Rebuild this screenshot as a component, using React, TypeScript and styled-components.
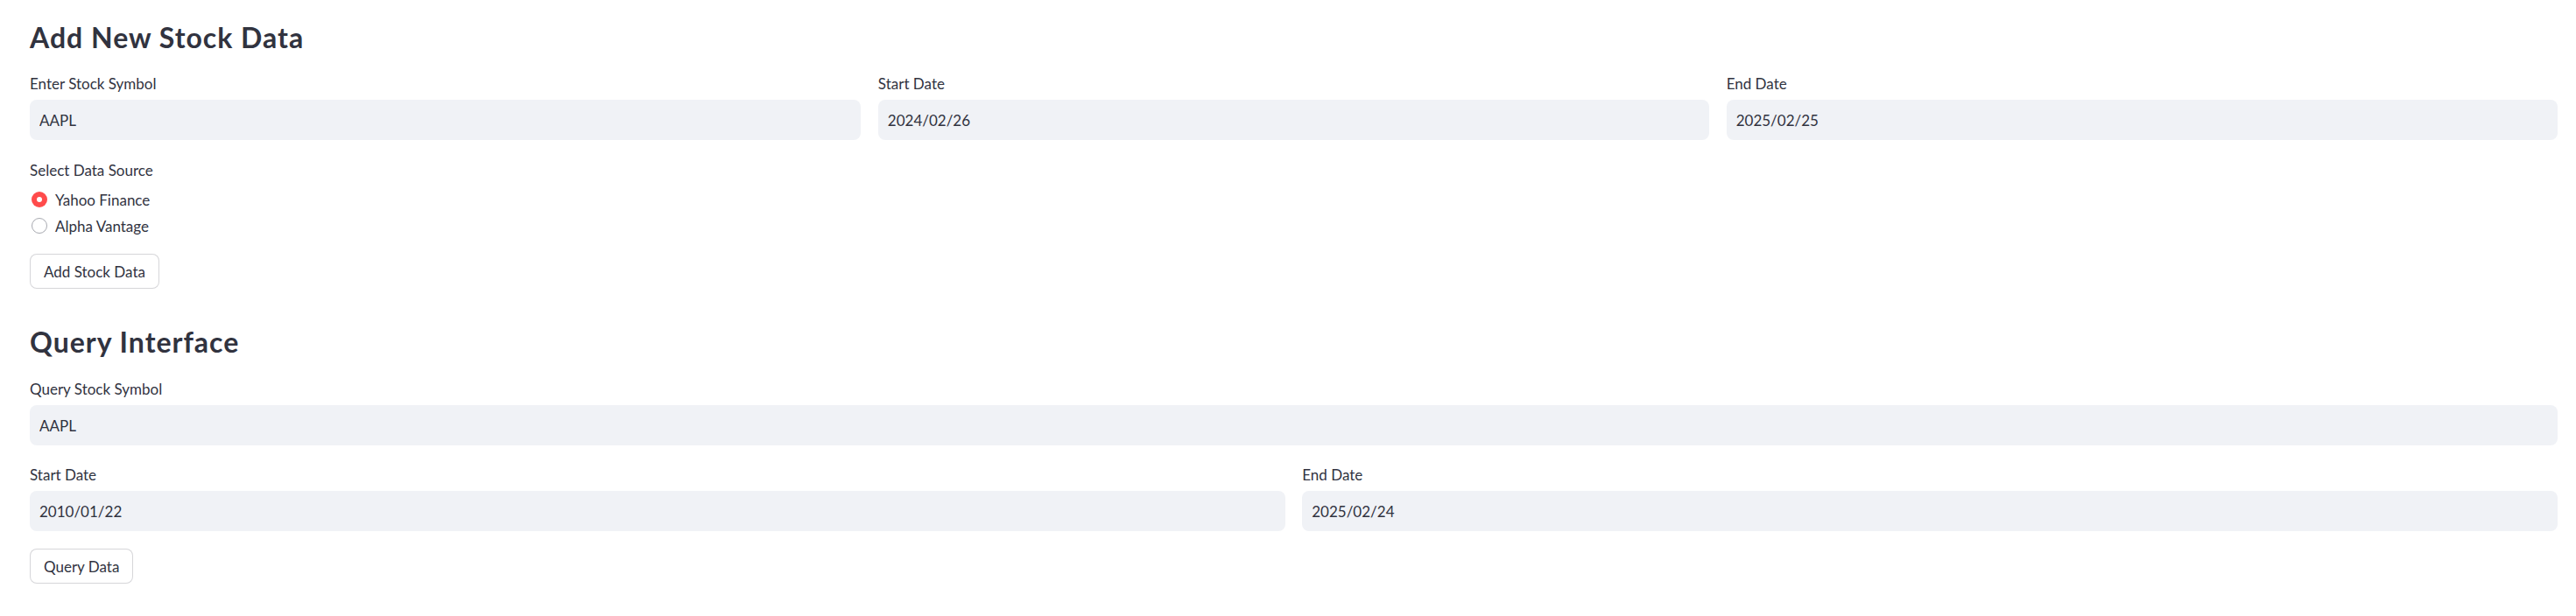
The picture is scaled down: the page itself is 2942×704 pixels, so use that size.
import styled, { createGlobalStyle } from "styled-components";

const GlobalStyle = createGlobalStyle`
  html, body {
    margin: 0;
    padding: 0;
    background: #ffffff;
  }
  body {
    font-family: "Source Sans Pro", Lato, "Noto Sans", sans-serif;
    color: #31333f;
  }
`;

const Page = styled.main`
  padding: 25px 21px 0 34px;
`;

const Heading = styled.h2<{ $mb: number }>`
  margin: 0 0 ${(p) => p.$mb}px;
  font-size: 32px;
  line-height: 36px;
  font-weight: 700;
  letter-spacing: 1px;
  color: #31333f;
`;

const Row = styled.div<{ $cols: number; $mb: number }>`
  display: grid;
  grid-template-columns: repeat(${(p) => p.$cols}, 1fr);
  column-gap: 19.5px;
  margin-bottom: ${(p) => p.$mb}px;
`;

const Field = styled.div`
  display: flex;
  flex-direction: column;
  min-width: 0;
`;

const Label = styled.label`
  font-size: 17px;
  line-height: 22px;
  margin-bottom: 7px;
  color: #31333f;
`;

const Input = styled.input`
  box-sizing: border-box;
  height: 46px;
  width: 100%;
  border: none;
  outline: none;
  border-radius: 8px;
  background: #f0f2f6;
  padding: 0 11px;
  font-family: inherit;
  font-size: 17px;
  color: #31333f;
`;

const RadioGroup = styled.div<{ $mb: number }>`
  display: flex;
  flex-direction: column;
  margin-bottom: ${(p) => p.$mb}px;
`;

const RadioRow = styled.div`
  display: flex;
  align-items: center;
  height: 30px;
  font-size: 17px;
  color: #31333f;
`;

const RadioDot = styled.span<{ $checked: boolean }>`
  box-sizing: border-box;
  width: 18px;
  height: 18px;
  margin: 0 9px 0 2px;
  border-radius: 50%;
  display: inline-flex;
  align-items: center;
  justify-content: center;
  background: ${(p) => (p.$checked ? "#ff4b4b" : "#ffffff")};
  border: ${(p) => (p.$checked ? "none" : "1.5px solid #a7a9b0")};

  &::after {
    content: "";
    width: 6px;
    height: 6px;
    border-radius: 50%;
    background: #ffffff;
    display: ${(p) => (p.$checked ? "block" : "none")};
  }
`;

const Button = styled.button<{ $mb: number }>`
  display: inline-flex;
  align-items: center;
  height: 40px;
  padding: 0 15px;
  margin-bottom: ${(p) => p.$mb}px;
  border: 1px solid rgba(49, 51, 63, 0.2);
  border-radius: 8px;
  background: #ffffff;
  font-family: inherit;
  font-size: 17px;
  color: #31333f;
`;

function TextField({ label, value }: { label: string; value: string }) {
  return (
    <Field>
      <Label>{label}</Label>
      <Input readOnly value={value} />
    </Field>
  );
}

const sources = ["Yahoo Finance", "Alpha Vantage"];

export default function App() {
  return (
    <Page>
      <GlobalStyle />
      <Heading $mb={24}>Add New Stock Data</Heading>
      <Row $cols={3} $mb={24}>
        <TextField label="Enter Stock Symbol" value="AAPL" />
        <TextField label="Start Date" value="2024/02/26" />
        <TextField label="End Date" value="2025/02/25" />
      </Row>
      <RadioGroup $mb={17}>
        <Label>Select Data Source</Label>
        {sources.map((s, i) => (
          <RadioRow key={s}>
            <RadioDot $checked={i === 0} />
            {s}
          </RadioRow>
        ))}
      </RadioGroup>
      <div>
        <Button $mb={43}>Add Stock Data</Button>
      </div>

      <Heading $mb={25}>Query Interface</Heading>
      <Row $cols={1} $mb={23}>
        <TextField label="Query Stock Symbol" value="AAPL" />
      </Row>
      <Row $cols={2} $mb={20}>
        <TextField label="Start Date" value="2010/01/22" />
        <TextField label="End Date" value="2025/02/24" />
      </Row>
      <div>
        <Button $mb={0}>Query Data</Button>
      </div>
    </Page>
  );
}
